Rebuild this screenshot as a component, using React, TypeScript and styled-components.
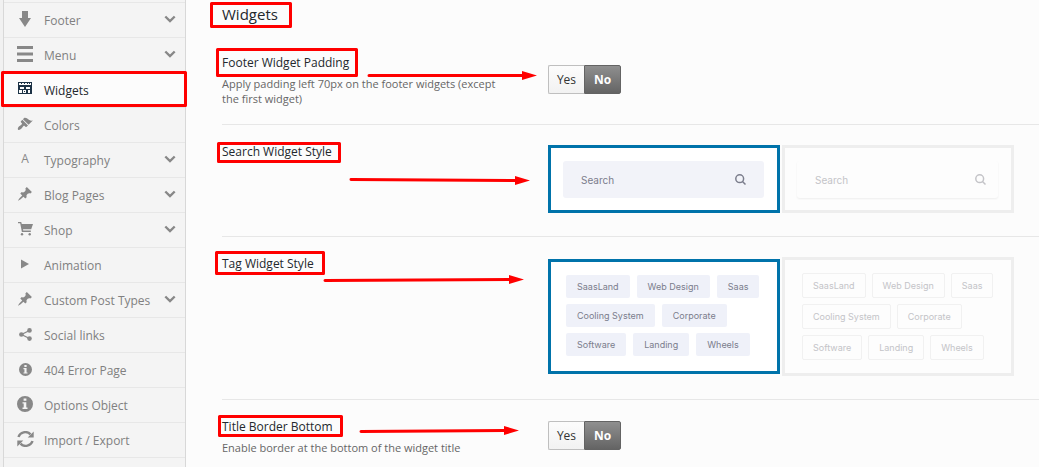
import React from "react";
import styled, { createGlobalStyle, css } from "styled-components";

const GlobalStyle = createGlobalStyle`
  *, *::before, *::after { box-sizing: border-box; }
  body {
    margin: 0;
    background: #fcfcfc;
    color: #23282d;
    font-family: "Open Sans", "Noto Sans", sans-serif;
    font-size: 12px;
  }
`;

const Page = styled.div`
  position: relative;
  display: flex;
  height: 100vh;
  overflow: hidden;
`;

const Sidebar = styled.nav`
  flex: 0 0 186px;
  border-left: 3px solid #f1f1f1;
  background: #f4f4f4;
`;

const SectionList = styled.ul`
  min-height: 100%;
  margin: 0;
  padding: 2px 0 0;
  list-style: none;
  border: solid #d8d8d8;
  border-width: 0 1px;
`;

const SectionItem = styled.li`
  border-top: 1px solid #e7e7e7;
  &:last-child { border-bottom: 1px solid #e7e7e7; }
`;

const SectionLink = styled.a<{ $active?: boolean }>`
  display: grid;
  grid-template-columns: 40px 1fr 32px;
  height: 34px;
  padding-bottom: 2px;
  align-items: center;
  color: ${(p) => (p.$active ? "#23282d" : "#808080")};
  background: ${(p) => (p.$active ? "#fcfcfc" : "transparent")};
  text-decoration: none;
  svg { display: block; fill: currentColor; }
`;

const IconSlot = styled.span<{ $active?: boolean }>`
  display: flex;
  justify-content: center;
  padding-left: 2px;
  color: ${(p) => (p.$active ? "#1d3346" : "#888")};
`;

const SectionName = styled.span`
  padding-top: 4px;
  line-height: 20px;
  white-space: nowrap;
`;

const Main = styled.main`
  flex: 1;
  min-width: 0;
  padding-left: 36px;
`;

const Heading = styled.h1`
  margin: 0;
  padding: 4px 0 12px;
  font-size: 15px;
  font-weight: 400;
  line-height: 20px;
`;

const Field = styled.section<{ $center?: boolean }>`
  display: grid;
  grid-template-columns: 326px 1fr;
  align-items: ${(p) => (p.$center ? "center" : "start")};
  padding: 16px 0 18px;
  border-bottom: 1px solid #e7e7e7;
  &:last-child { border-bottom: 0; }
`;

const FieldText = styled.div`
  max-width: 290px;
`;

const FieldName = styled.h2`
  margin: 0;
  font-size: 12px;
  font-weight: 400;
  line-height: 22px;
`;

const Description = styled.p`
  margin: 2px 0 0;
  color: #666;
  font-size: 11px;
  line-height: 15px;
`;

const Switch = styled.div`
  display: flex;
  width: 73px;
  height: 29px;
`;

const SwitchButton = styled.button<{ $on?: boolean }>`
  flex: 1;
  padding: 0;
  border: 1px solid #bfbfbf;
  border-right: 0;
  border-radius: 2px 0 0 2px;
  background: linear-gradient(#fcfcfc, #f2f2f2);
  color: #333;
  font: 400 12px/27px "Open Sans", "Noto Sans", sans-serif;
  ${(p) =>
    p.$on &&
    css`
      border: 1px solid #636363;
      border-radius: 0 2px 2px 0;
      background: linear-gradient(#8f8f8f, #646464);
      color: #fff;
      font-weight: 700;
    `}
`;

const Choices = styled.div`
  display: flex;
  gap: 2px;
  align-items: center;
  margin: 4px 0 5px;
`;

const Choice = styled.label<{ $height: number }>`
  flex: 0 0 232px;
  height: ${(p) => p.$height}px;
  border: 3px solid #eee;
  background: #fdfdfd;
  color: #c4c4c8;
  &:has(input:checked) {
    border-color: #0073aa;
    background: #fff;
    color: #7b7d8c;
  }
  font-family: Inter, "Open Sans", sans-serif;
`;

const HiddenRadio = styled.input`
  position: absolute;
  opacity: 0;
  pointer-events: none;
`;

const SearchPreview = styled.span<{ $filled?: boolean }>`
  display: flex;
  height: 37px;
  margin: 13px 13px 0 12px;
  padding: 0 ${(p) => (p.$filled ? "18px 0 18px" : "12px 0 18px")};
  align-items: center;
  justify-content: space-between;
  border-radius: 3px;
  background: ${(p) => (p.$filled ? "#f2f3f9" : "#fdfdfd")};
  box-shadow: ${(p) => (p.$filled ? "none" : "0 1px 2px #eee")};
  font-size: 10px;
`;

const TagCloud = styled.span<{ $filled?: boolean }>`
  display: flex;
  flex-direction: column;
  gap: 6px;
  padding: ${(p) => (p.$filled ? "13px 0 0 15px" : "13px 0 0 17px")};
`;

const TagRow = styled.span<{ $filled?: boolean }>`
  display: flex;
  gap: ${(p) => (p.$filled ? 7 : 6)}px;
`;

const Tag = styled.span<{ $filled?: boolean }>`
  height: ${(p) => (p.$filled ? 23 : 25)}px;
  padding: 0 ${(p) => (p.$filled ? 11 : 10)}px;
  border: ${(p) => (p.$filled ? "0" : "1px solid #f1f1f1")};
  border-radius: 2px;
  background: ${(p) => (p.$filled ? "#eff1f9" : "transparent")};
  font-size: 9px;
  line-height: 23px;
  white-space: nowrap;
`;

const Annotations = styled.svg`
  position: absolute;
  top: 0;
  left: 0;
  pointer-events: none;
  fill: none;
  stroke: #f00;
  stroke-width: 3;
  stroke-linejoin: round;
  stroke-linecap: round;
`;

const LetterIcon = styled.span`
  font-size: 12px;
  line-height: 16px;
`;

const PIN =
  "M10.44 3.02l1.82-1.82 6.36 6.35-1.83 1.82c-1.05-.68-2.48-.57-3.41.36l-.75.75c-.92.93-1.04 2.35-.35 3.41l-1.83 1.82-2.41-2.41-2.8 2.79c-.42.42-3.38 2.71-3.8 2.29s1.86-3.39 2.28-3.81l2.79-2.79L4.1 9.36l1.83-1.82c1.05.69 2.48.57 3.4-.36l.75-.75c.93-.92 1.05-2.35.36-3.41z";
const BRUSH =
  "M14.48 11.06L7.41 3.99l1.5-1.5c.5-.56 2.3-.47 3.51.32 1.21.8 1.43 1.28 2.91 2.1 1.18.64 2.45 1.26 4.45.85zm-.71.71L6.7 4.7 4.93 6.47c-.39.39-.39 1.02 0 1.41l1.06 1.06c.39.39.39 1.03 0 1.42-.6.6-1.43 1.11-2.21 1.69-.35.26-.7.53-1.01.84C1.43 14.23.4 16.08 1.4 17.07c.99 1 2.84-.03 4.18-1.36.31-.31.58-.66.85-1.02.57-.78 1.08-1.61 1.69-2.21.39-.39 1.02-.39 1.41 0l1.06 1.06c.39.39 1.02.39 1.41 0z";

const ArrowDownIcon = () => (
  <svg width="12" height="16" viewBox="0 0 12 16"><path d="M3 0h6v7h3l-6 9-6-9h3z" /></svg>
);
const MenuIcon = () => (
  <svg width="16" height="16" viewBox="0 0 16 16"><path d="M0 0h16v3H0zM0 6.5h16v3H0zM0 13h16v3H0z" /></svg>
);
const WidgetsIcon = () => (
  <svg width="14" height="14" viewBox="0 0 14 14">
    <path
      fillRule="evenodd"
      d="M0 0h14v12H0zM1 1v2h12V1zM2 5v2h4V5zM8 5v2h4V5zM1 8v3h3V8zM5 8v3h3V8zM10 8v3h2V8z"
    />
    <path d="M3 1h1v1H3zM6 1h1v1H6zM9 1h1v1H9zM11 1h1v1h-1zM6 9h1v1H6z" />
  </svg>
);
const DashIcon = ({ d }: { d: string }) => (
  <svg width="16" height="16" viewBox="0 0 20 20"><path d={d} /></svg>
);
const CartIcon = () => (
  <svg width="15" height="14" viewBox="0 0 15 14">
    <path d="M0 0h3.200l.6 2H15l-1.800 5.200H5l.2 1.200h7.600V10H3.900L2.200 1.300H0z" />
    <circle cx="4" cy="12.200" r="1.200" /><circle cx="11.700" cy="12.200" r="1.200" />
  </svg>
);
const PlayIcon = () => (
  <svg width="8" height="10" viewBox="0 0 8 10"><path d="M0 .5L8 5 0 9.500z" /></svg>
);
const ShareIcon = () => (
  <svg width="13" height="13" viewBox="0 0 13 13">
    <path d="M10.500 2.500l-8 4 8 4" fill="none" stroke="currentColor" strokeWidth="1.300" />
    <circle cx="10.500" cy="2.400" r="2.300" /><circle cx="2.400" cy="6.500" r="2.300" /><circle cx="10.500" cy="10.600" r="2.300" />
  </svg>
);
const InfoIcon = ({ size }: { size: number }) => (
  <svg width={size} height={size} viewBox="0 0 16 16">
    <path fillRule="evenodd" d="M8 0a8 8 0 1 1 0 16A8 8 0 0 1 8 0zM6.600 2.500v2.300h2.800V2.500zM5.500 6.200v1.400h1.200v4H5.500V13h5v-1.400H9.300V6.200z" />
  </svg>
);
const RefreshIcon = () => (
  <svg width="17" height="16" viewBox="0 0 17 16">
    <path d="M1.500 6A7 6.500 0 0 1 13.500 3.300M15.500 10A7 6.500 0 0 1 3.500 12.700" fill="none" stroke="currentColor" strokeWidth="2.400" />
    <path d="M16.700.6v6h-6zM.3 15.400v-6h6z" />
  </svg>
);
const Chevron = () => (
  <svg width="12" height="8" viewBox="0 0 12 8">
    <path d="M1.300 1.500L6 6l4.700-4.500" fill="none" stroke="currentColor" strokeWidth="2.400" />
  </svg>
);
const SearchIcon = () => (
  <svg width="11" height="11" viewBox="0 0 11 11" fill="none" stroke="currentColor" strokeWidth="1.500">
    <circle cx="4.700" cy="4.700" r="3.900" /><path d="M7.500 7.500l3 3" />
  </svg>
);

const sections: { name: string; icon: React.ReactNode; more?: boolean; active?: boolean }[] = [
  { name: "Footer", icon: <ArrowDownIcon />, more: true },
  { name: "Menu", icon: <MenuIcon />, more: true },
  { name: "Widgets", icon: <WidgetsIcon />, active: true },
  { name: "Colors", icon: <DashIcon d={BRUSH} /> },
  { name: "Typography", icon: <LetterIcon aria-hidden>A</LetterIcon>, more: true },
  { name: "Blog Pages", icon: <DashIcon d={PIN} />, more: true },
  { name: "Shop", icon: <CartIcon />, more: true },
  { name: "Animation", icon: <PlayIcon /> },
  { name: "Custom Post Types", icon: <DashIcon d={PIN} />, more: true },
  { name: "Social links", icon: <ShareIcon /> },
  { name: "404 Error Page", icon: <InfoIcon size={13} /> },
  { name: "Options Object", icon: <InfoIcon size={16} /> },
  { name: "Import / Export", icon: <RefreshIcon /> },
];

const tagRows = [
  ["SaasLand", "Web Design", "Saas"],
  ["Cooling System", "Corporate"],
  ["Software", "Landing", "Wheels"],
];

const YesNo = ({ label }: { label: string }) => (
  <Switch role="group" aria-label={label}>
    <SwitchButton type="button" aria-pressed={false}>Yes</SwitchButton>
    <SwitchButton type="button" aria-pressed $on>No</SwitchButton>
  </Switch>
);

const Tags = ({ filled }: { filled?: boolean }) => (
  <TagCloud $filled={filled}>
    {tagRows.map((row) => (
      <TagRow key={row[0]} $filled={filled}>
        {row.map((tag) => <Tag key={tag} $filled={filled}>{tag}</Tag>)}
      </TagRow>
    ))}
  </TagCloud>
);

export default function App() {
  return (
    <Page>
      <GlobalStyle />
      <Sidebar>
        <SectionList>
          {sections.map((s) => (
            <SectionItem key={s.name}>
              <SectionLink href="#" $active={s.active}>
                <IconSlot $active={s.active}>{s.icon}</IconSlot>
                <SectionName>{s.name}</SectionName>
                {s.more && <IconSlot><Chevron /></IconSlot>}
              </SectionLink>
            </SectionItem>
          ))}
        </SectionList>
      </Sidebar>
      <Main>
        <Heading>Widgets</Heading>
        <Field $center>
          <FieldText>
            <FieldName>Footer Widget Padding</FieldName>
            <Description>Apply padding left 70px on the footer widgets (except the first widget)</Description>
          </FieldText>
          <YesNo label="Footer Widget Padding" />
        </Field>
        <Field>
          <FieldName>Search Widget Style</FieldName>
          <Choices>
            <Choice $height={68}>
              <HiddenRadio type="radio" name="search-style" defaultChecked />
              <SearchPreview $filled>Search<SearchIcon /></SearchPreview>
            </Choice>
            <Choice $height={68}>
              <HiddenRadio type="radio" name="search-style" />
              <SearchPreview>Search<SearchIcon /></SearchPreview>
            </Choice>
          </Choices>
        </Field>
        <Field>
          <FieldName>Tag Widget Style</FieldName>
          <Choices>
            <Choice $height={115}>
              <HiddenRadio type="radio" name="tag-style" defaultChecked />
              <Tags filled />
            </Choice>
            <Choice $height={119}>
              <HiddenRadio type="radio" name="tag-style" />
              <Tags />
            </Choice>
          </Choices>
        </Field>
        <Field $center>
          <FieldText>
            <FieldName>Title Border Bottom</FieldName>
            <Description>Enable border at the bottom of the widget title</Description>
          </FieldText>
          <YesNo label="Title Border Bottom" />
        </Field>
      </Main>
      <Annotations width="560" height="450" viewBox="0 0 560 450" aria-hidden>
        <rect x="2.500" y="72.500" width="183" height="33" />
        <rect x="211.500" y="3.500" width="79" height="23" />
        <rect x="217.500" y="49.500" width="139" height="26" />
        <rect x="218.500" y="143.500" width="121" height="18" />
        <rect x="216.500" y="252.500" width="107" height="21" />
        <rect x="219.500" y="416.500" width="122" height="19" />
        <path d="M369 75.500H523M351 179.500L516 180.500M325 280.500L510 279.500M361 431.500L505 430.500" />
        <path
          d="M522 71l15 4.500-15 4.500zM515 176l15 4.500-15 4.500zM509 275l15 4.500-15 4.500zM504 426l15 4.500-15 4.500z"
          fill="#f00"
          stroke="none"
        />
      </Annotations>
    </Page>
  );
}
